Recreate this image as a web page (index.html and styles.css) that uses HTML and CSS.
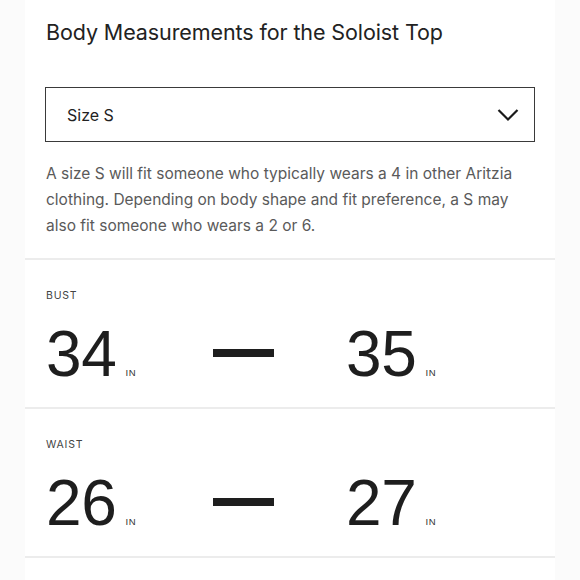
FILE: index.html
```html
<!DOCTYPE html>
<html>
<head>
<meta charset="utf-8">
<link rel="stylesheet" href="styles.css">
</head>
<body>
<div class="panel">
  <h1 class="title">Body Measurements for the Soloist Top</h1>
  <div class="select">
    <span class="select-label">Size S</span>
    <svg class="chevron" width="22" height="14" viewBox="0 0 22 14"><path d="M1.5 2 L11 11.5 L20.5 2" fill="none" stroke="#1a1a1a" stroke-width="2.2"/></svg>
  </div>
  <p class="desc">A size S will fit someone who typically wears a 4 in other Aritzia<br>clothing. Depending on body shape and fit preference, a S may<br>also fit someone who wears a 2 or 6.</p>
  <section class="measure">
    <div class="label">BUST</div>
    <div class="range">
      <div class="val"><span class="num">34</span><span class="unit">IN</span></div>
      <div class="dash"></div>
      <div class="val"><span class="num">35</span><span class="unit">IN</span></div>
    </div>
  </section>
  <section class="measure">
    <div class="label">WAIST</div>
    <div class="range">
      <div class="val"><span class="num">26</span><span class="unit">IN</span></div>
      <div class="dash"></div>
      <div class="val"><span class="num">27</span><span class="unit">IN</span></div>
    </div>
  </section>
  <div class="end"></div>
</div>
</body>
</html>
```
FILE: styles.css
```css
html, body {
  margin: 0;
  padding: 0;
  background: #fbfbfb;
}
body {
  height: 580px;
  overflow: hidden;
}
.panel {
  margin-left: 25px;
  width: 530px;
  height: 580px;
  background: #ffffff;
  font-family: Inter, "Liberation Sans", sans-serif;
}
.title {
  margin: 0;
  padding: 20px 0 0 21px;
  font-size: 21.5px;
  line-height: 24px;
  font-weight: 400;
  color: #222;
  letter-spacing: -0.1px;
}
.select {
  margin: 43px 20px 0 20px;
  height: 53px;
  border: 1.5px solid #3a3a3a;
  display: flex;
  align-items: center;
  justify-content: space-between;
  padding: 0 15px 0 21px;
}
.select-label {
  font-size: 16px;
  color: #222;
}
.chevron {
  display: block;
}
.desc {
  margin: 19px 0 0 21px;
  font-size: 15.5px;
  line-height: 26px;
  color: #5a5a5a;
}
.measure {
  border-top: 2px solid #ececec;
  margin-top: 19px;
  height: 147px;
  padding-left: 21px;
}
.measure + .measure {
  margin-top: 0;
}
.label {
  padding-top: 30px;
  font-size: 10.5px;
  line-height: 12px;
  letter-spacing: 0.8px;
  color: #444;
}
.range {
  margin-top: 24px;
  display: grid;
  grid-template-columns: 167px 133px auto;
  align-items: end;
  font-family: "Liberation Sans", Arial, sans-serif;
}
.val {
  display: flex;
  align-items: baseline;
}
.num {
  font-size: 64px;
  line-height: 56px;
  color: #1e1e1e;
  letter-spacing: -0.3px;
}
.unit {
  margin-left: 9px;
  font-size: 9.5px;
  letter-spacing: 0.5px;
  color: #333;
}
.dash {
  width: 61px;
  height: 8px;
  background: #1e1e1e;
  align-self: center;
  margin-top: -2px;
}
.end {
  border-top: 2px solid #ececec;
}
```
